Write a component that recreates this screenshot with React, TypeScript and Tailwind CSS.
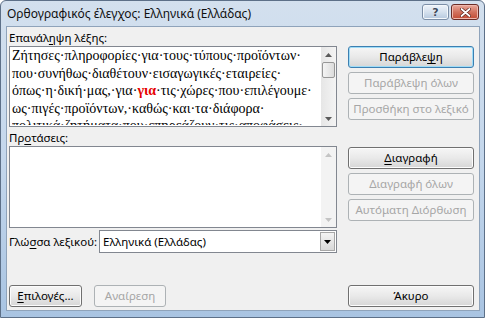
const UI = "font-['Noto_Sans',sans-serif] text-[11.5px]";

function Btn({
  children,
  disabled,
  primary,
  className = "",
}: {
  children: React.ReactNode;
  disabled?: boolean;
  primary?: boolean;
  className?: string;
}) {
  if (disabled) {
    return (
      <div
        className={`flex h-[22px] items-center justify-center whitespace-nowrap rounded-[3px] border border-[#adb2b5] bg-[#f4f4f4] text-[#a6a6a6] ${className}`}
      >
        {children}
      </div>
    );
  }
  return (
    <div
      className={`flex h-[22px] items-center justify-center whitespace-nowrap rounded-[3px] border bg-gradient-to-b from-[#f6f6f6] via-[#e9e9e9] to-[#d6d6d6] text-black ${
        primary
          ? "border-[#3c7fb1] shadow-[inset_0_0_0_1px_#9fdcf7]"
          : "border-[#707070] shadow-[inset_0_0_0_1px_#fcfcfc]"
      } ${className}`}
    >
      {children}
    </div>
  );
}

function Arrow({ up, color = "#5a5a5a" }: { up?: boolean; color?: string }) {
  return (
    <svg width="7" height="4" viewBox="0 0 7 4">
      <path d={up ? "M0 4 L3.5 0 L7 4 Z" : "M0 0 L3.5 4 L7 0 Z"} fill={color} />
    </svg>
  );
}

export default function App() {
  return (
    <div
      className={`${UI} flex h-[318px] w-[485px] flex-col overflow-hidden rounded-t-[6px] border border-[#5d7088] bg-gradient-to-b from-[#d3e0ee] via-[#c4d7ec] to-[#a9c4e2] text-black`}
    >
      {/* Title bar */}
      <div className="flex h-[25px] shrink-0 items-center pl-[6px] pr-[5px]">
        <span className="whitespace-nowrap text-[12px] leading-[14px] text-[#101010]">
          Ορθογραφικός έλεγχος: Ελληνικά (Ελλάδας)
        </span>
        <div className="ml-auto flex gap-[2px] self-start pt-[3px]">
          <div className="flex h-[16px] w-[27px] items-center justify-center rounded-[3px] border border-[#7b8ea7] bg-gradient-to-b from-[#eef3fa] via-[#d5e1ee] to-[#b5c8de] shadow-[inset_0_0_0_1px_#f4f8fc]">
            <span className="font-['DejaVu_Sans',sans-serif] text-[11px] font-bold leading-none text-[#3d4a5c] [text-shadow:0_0_1px_#fff]">
              ?
            </span>
          </div>
          <div className="flex h-[16px] w-[28px] items-center justify-center rounded-[3px] border border-[#6b2c26] bg-gradient-to-b from-[#e9a99c] via-[#d2725f] to-[#c24a33] shadow-[inset_0_0_0_1px_#efb8ad]">
            <svg width="11" height="9" viewBox="0 0 11 9">
              <path d="M1.5 1 L9.5 8 M9.5 1 L1.5 8" stroke="#5a2018" strokeWidth="3.2" strokeLinecap="round" />
              <path d="M1.5 1 L9.5 8 M9.5 1 L1.5 8" stroke="#ffffff" strokeWidth="1.8" strokeLinecap="round" />
            </svg>
          </div>
        </div>
      </div>

      {/* Client area */}
      <div className="mb-[6px] ml-[5px] mr-[4px] flex flex-1 flex-col border border-[#8fa3ba] bg-[#f0f0f0] pb-[3px] pl-[2px] pr-[5px] pt-[3px]">
        <div className="flex gap-[11px]">
          {/* Left column */}
          <div className="flex w-[328px] flex-col">
            <div className="h-[15px] whitespace-nowrap leading-[15px]">
              Επανάλ<span className="underline underline-offset-2">η</span>ψη λέξης:
            </div>
            <div className="mt-[1px] flex h-[81px] overflow-hidden border border-[#828790] bg-white">
              <div className="h-[79px] flex-1 overflow-hidden whitespace-nowrap pl-[2px] font-['Liberation_Serif',serif] text-[14px] leading-[17.5px] text-black">
                <div>Ζήτησες·πληροφορίες·για·τους·τύπους·προϊόντων·</div>
                <div>που·συνήθως·διαθέτουν·εισαγωγικές·εταιρείες·</div>
                <div>
                  όπως·η·δική·μας,·για·<span className="font-bold text-[#e60000]">για</span>·τις·χώρες·που·επιλέγουμε·
                </div>
                <div>ως·πιγές·προϊόντων,·καθώς·και·τα·διάφορα·</div>
                <div className="h-[8px] overflow-hidden leading-[17.5px]">
                  πολιτικά·ζητήματα·που·επηρεάζουν·τις·αποφάσεις·
                </div>
              </div>
              <div className="flex w-[15px] flex-col items-center bg-gradient-to-r from-[#e6e6e6] to-[#f4f4f4]">
                <div className="flex h-[15px] items-center">
                  <Arrow up />
                </div>
                <div className="h-[16px] w-[13px] rounded-[2px] border border-[#979797] bg-gradient-to-r from-[#f4f4f4] to-[#dcdcdc]" />
                <div className="mt-auto flex h-[15px] items-center">
                  <Arrow />
                </div>
              </div>
            </div>

            <div className="mt-[3px] h-[15px] whitespace-nowrap leading-[15px]">
              Πρ<span className="underline underline-offset-2">ο</span>τάσεις:
            </div>
            <div className="mt-[1px] flex h-[82px] border border-[#828790] bg-white">
              <div className="flex-1" />
              <div className="flex w-[15px] flex-col items-center bg-[#f3f3f3]">
                <div className="flex h-[15px] items-center">
                  <Arrow up color="#c4c4c4" />
                </div>
                <div className="mt-auto flex h-[15px] items-center">
                  <Arrow color="#c4c4c4" />
                </div>
              </div>
            </div>

            <div className="mt-[2px] flex h-[23px] items-center">
              <span className="w-[90px] shrink-0 whitespace-nowrap">
                Γλώ<span className="underline underline-offset-2">σ</span>σα λεξικού:
              </span>
              <div className="flex h-[23px] flex-1 items-center border border-[#828790] bg-white">
                <span className="whitespace-nowrap pl-[3px]">Ελληνικά (Ελλάδας)</span>
                <div className="ml-auto mr-[1px] flex h-[19px] w-[15px] items-center justify-center border border-[#a7a7a7] bg-gradient-to-b from-[#f4f4f4] to-[#d8d8d8]">
                  <Arrow color="#000" />
                </div>
              </div>
            </div>
          </div>

          {/* Right column */}
          <div className="flex flex-1 flex-col pt-[16px]">
            <Btn primary>
              Παράβλε<span className="underline underline-offset-2">ψ</span>η
            </Btn>
            <Btn disabled className="mt-[4px]">
              Παράβλεψη όλων
            </Btn>
            <Btn disabled className="mt-[4px]">
              Προσθήκη στο λεξικό
            </Btn>
            <Btn className="mt-[27px]">
              <span className="underline underline-offset-2">Δ</span>ιαγραφή
            </Btn>
            <Btn disabled className="mt-[4px]">
              Διαγραφή όλων
            </Btn>
            <Btn disabled className="mt-[4px]">
              Αυτόματη Διόρθωση
            </Btn>
          </div>
        </div>

        {/* Bottom row */}
        <div className="mt-auto flex">
          <Btn className="w-[73px]">
            <span className="underline underline-offset-2">Ε</span>πιλογές...
          </Btn>
          <Btn disabled className="ml-[12px] w-[72px]">
            Αναίρεση
          </Btn>
          <Btn className="ml-auto w-[126px]">Άκυρο</Btn>
        </div>
      </div>
    </div>
  );
}
